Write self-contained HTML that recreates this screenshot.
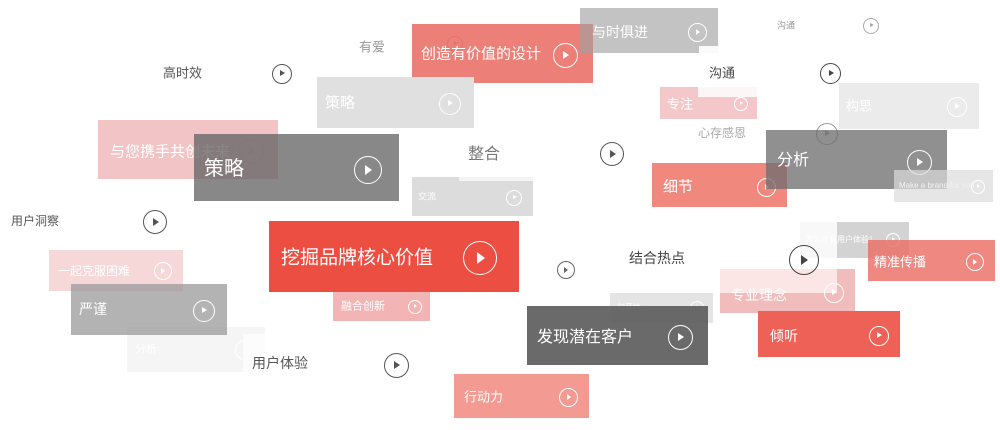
<!DOCTYPE html>
<html><head><meta charset="utf-8"><style>
html,body{margin:0;padding:0;background:#fff;width:1000px;height:430px;overflow:hidden;position:relative;font-family:"Liberation Sans","Noto Sans CJK SC",sans-serif}
.b{position:absolute}
.t{position:absolute;transform:translateY(-50%);white-space:nowrap;line-height:1}
.c{position:absolute;border-radius:50%;box-sizing:border-box;border:1.3px solid currentColor}
.c::after{content:"";position:absolute;left:50%;top:50%;margin-left:-.09em;margin-top:-.18em;border-top:.18em solid transparent;border-bottom:.18em solid transparent;border-left:.25em solid currentColor}
.w{color:#fff}
</style></head><body>

<div class="t" style="left:359px;top:47px;font-size:13px;color:#999">有爱</div>
<div class="c" style="left:447px;top:36px;width:16px;height:16px;font-size:16px;color:#bbb"></div>

<div class="t" style="left:163px;top:73px;font-size:13px;color:#555">高时效</div>
<div class="c" style="left:272px;top:64px;width:20px;height:20px;font-size:20px;color:#555"></div>

<div class="b" style="left:412px;top:24px;width:181px;height:59px;background:rgba(232,100,90,.82)"></div>
<div class="t w" style="left:421px;top:54px;font-size:15px">创造有价值的设计</div>
<div class="c w" style="left:553px;top:43px;width:25px;height:25px;font-size:25px"></div>

<div class="b" style="left:580px;top:8px;width:138px;height:45px;background:rgba(160,160,160,.63)"></div>
<div class="t w" style="left:592px;top:32px;font-size:14px">与时俱进</div>
<div class="c w" style="left:688px;top:23px;width:19px;height:19px;font-size:19px"></div>
<div class="b" style="left:699px;top:46px;width:19px;height:7px;background:#fafafa"></div>

<div class="t" style="left:777px;top:26px;font-size:9px;color:#999">沟通</div>
<div class="c" style="left:863px;top:18px;width:16px;height:16px;font-size:16px;color:#aaa"></div>

<div class="b" style="left:317px;top:77px;width:157px;height:51px;background:#e0e0e0"></div>
<div class="t w" style="left:325px;top:103px;font-size:15px">策略</div>
<div class="c w" style="left:439px;top:93px;width:22px;height:22px;font-size:22px"></div>

<div class="b" style="left:98px;top:120px;width:180px;height:59px;background:#f2c4c6"></div>
<div class="t w" style="left:110px;top:152px;font-size:15px">与您携手共创未来</div>
<div class="c" style="left:239px;top:139px;width:25px;height:25px;font-size:25px;color:#e4b6b6"></div>

<div class="b" style="left:194px;top:134px;width:205px;height:67px;background:rgba(100,100,100,.77)"></div>
<div class="t w" style="left:204px;top:169px;font-size:20px">策略</div>
<div class="c w" style="left:354px;top:156px;width:28px;height:28px;font-size:28px"></div>

<div class="t" style="left:468px;top:155px;font-size:16px;color:#777">整合</div>
<div class="c" style="left:600px;top:142px;width:24px;height:24px;font-size:24px;color:#555"></div>

<div class="b" style="left:412px;top:177px;width:121px;height:39px;background:#dcdcdc"></div>
<div class="b" style="left:459px;top:177px;width:74px;height:4px;background:#f4f4f4"></div>
<div class="t w" style="left:418px;top:197px;font-size:9px">交流</div>
<div class="c w" style="left:506px;top:190px;width:16px;height:16px;font-size:16px"></div>

<div class="t" style="left:709px;top:73px;font-size:13px;color:#444">沟通</div>
<div class="c" style="left:820px;top:63px;width:21px;height:21px;font-size:21px;color:#444"></div>

<div class="b" style="left:660px;top:87px;width:97px;height:32px;background:#f4c8ca"></div>
<div class="b" style="left:698px;top:87px;width:59px;height:10px;background:#fdf6f6"></div>
<div class="t w" style="left:667px;top:104px;font-size:13px">专注</div>
<div class="c w" style="left:734px;top:97px;width:14px;height:14px;font-size:14px"></div>

<div class="b" style="left:839px;top:83px;width:140px;height:46px;background:#ebebeb"></div>
<div class="t w" style="left:846px;top:106px;font-size:13px">构思</div>
<div class="c w" style="left:947px;top:97px;width:20px;height:20px;font-size:20px"></div>

<div class="t" style="left:698px;top:133px;font-size:12px;color:#aaa">心存感恩</div>
<div class="c" style="left:816px;top:123px;width:22px;height:22px;font-size:22px;color:#999"></div>

<div class="b" style="left:652px;top:163px;width:135px;height:44px;background:#f0887e"></div>
<div class="t w" style="left:663px;top:187px;font-size:15px">细节</div>
<div class="c w" style="left:757px;top:178px;width:19px;height:19px;font-size:19px"></div>

<div class="b" style="left:766px;top:130px;width:181px;height:59px;background:rgba(110,110,110,.77)"></div>
<div class="t w" style="left:777px;top:161px;font-size:16px">分析</div>
<div class="c w" style="left:907px;top:150px;width:25px;height:25px;font-size:25px"></div>

<div class="b" style="left:894px;top:170px;width:99px;height:32px;background:rgba(220,220,220,.7)"></div>
<div class="t" style="left:899px;top:186px;font-size:8px;color:#f2f2f2">Make a brand for you</div>
<div class="c w" style="left:971px;top:180px;width:14px;height:14px;font-size:14px"></div>

<div class="t" style="left:11px;top:221px;font-size:12px;color:#555">用户洞察</div>
<div class="c" style="left:143px;top:210px;width:24px;height:24px;font-size:24px;color:#555"></div>

<div class="b" style="left:269px;top:221px;width:250px;height:71px;background:#ec4e41"></div>
<div class="t w" style="left:281px;top:258px;font-size:19px">挖掘品牌核心价值</div>
<div class="c w" style="left:463px;top:241px;width:34px;height:34px;font-size:34px"></div>

<div class="b" style="left:49px;top:250px;width:134px;height:41px;background:#f6d8d9"></div>
<div class="t w" style="left:58px;top:271px;font-size:12px">一起克服困难</div>
<div class="c w" style="left:154px;top:262px;width:18px;height:18px;font-size:18px"></div>

<div class="c" style="left:557px;top:261px;width:18px;height:18px;font-size:18px;color:#666"></div>

<div class="t" style="left:629px;top:258px;font-size:14px;color:#444">结合热点</div>

<div class="b" style="left:800px;top:222px;width:109px;height:36px;background:#d3d3d3"></div>
<div class="b" style="left:800px;top:222px;width:37px;height:36px;background:#f8f8f8"></div>
<div class="t w" style="left:805px;top:240px;font-size:8px">怎么才有用户体验！</div>
<div class="c w" style="left:886px;top:233px;width:14px;height:14px;font-size:14px"></div>

<div class="b" style="left:720px;top:269px;width:135px;height:44px;background:#f1bcbc"></div>
<div class="b" style="left:720px;top:269px;width:117px;height:24px;background:rgba(255,246,246,.7)"></div>
<div class="t w" style="left:731px;top:295px;font-size:14px">专业理念</div>
<div class="c w" style="left:824px;top:283px;width:20px;height:20px;font-size:20px"></div>

<div class="c" style="left:789px;top:245px;width:30px;height:30px;font-size:30px;color:#444"></div>

<div class="b" style="left:868px;top:240px;width:127px;height:41px;background:rgba(236,110,100,.82)"></div>
<div class="t w" style="left:874px;top:262px;font-size:13px">精准传播</div>
<div class="c w" style="left:966px;top:253px;width:18px;height:18px;font-size:18px"></div>

<div class="b" style="left:127px;top:327px;width:138px;height:45px;background:#f5f5f5"></div>
<div class="t w" style="left:135px;top:350px;font-size:11px">分析</div>
<div class="c w" style="left:235px;top:340px;width:20px;height:20px;font-size:20px"></div>
<div class="b" style="left:243px;top:334px;width:22px;height:38px;background:#fcfcfc"></div>

<div class="b" style="left:71px;top:284px;width:156px;height:51px;background:rgba(150,150,150,.72)"></div>
<div class="t w" style="left:79px;top:309px;font-size:14px">严谨</div>
<div class="c w" style="left:193px;top:300px;width:22px;height:22px;font-size:22px"></div>

<div class="b" style="left:333px;top:292px;width:97px;height:29px;background:#f2b4b4"></div>
<div class="t w" style="left:341px;top:307px;font-size:11px">融合创新</div>
<div class="c w" style="left:408px;top:300px;width:14px;height:14px;font-size:14px"></div>

<div class="b" style="left:610px;top:293px;width:103px;height:30px;background:#e4e4e4"></div>
<div class="t w" style="left:617px;top:308px;font-size:8px">创意性</div>
<div class="c w" style="left:690px;top:301px;width:14px;height:14px;font-size:14px"></div>

<div class="b" style="left:527px;top:306px;width:181px;height:59px;background:rgba(90,90,90,.9)"></div>
<div class="t w" style="left:537px;top:338px;font-size:16px">发现潜在客户</div>
<div class="c w" style="left:668px;top:325px;width:25px;height:25px;font-size:25px"></div>

<div class="b" style="left:758px;top:311px;width:142px;height:46px;background:#ee6156"></div>
<div class="t w" style="left:770px;top:336px;font-size:14px">倾听</div>
<div class="c w" style="left:869px;top:326px;width:20px;height:20px;font-size:20px"></div>

<div class="t" style="left:252px;top:363px;font-size:14px;color:#555">用户体验</div>
<div class="c" style="left:384px;top:353px;width:25px;height:25px;font-size:25px;color:#555"></div>

<div class="b" style="left:454px;top:374px;width:135px;height:44px;background:#f39b93"></div>
<div class="t w" style="left:464px;top:397px;font-size:13px">行动力</div>
<div class="c w" style="left:559px;top:388px;width:19px;height:19px;font-size:19px"></div>

</body></html>
